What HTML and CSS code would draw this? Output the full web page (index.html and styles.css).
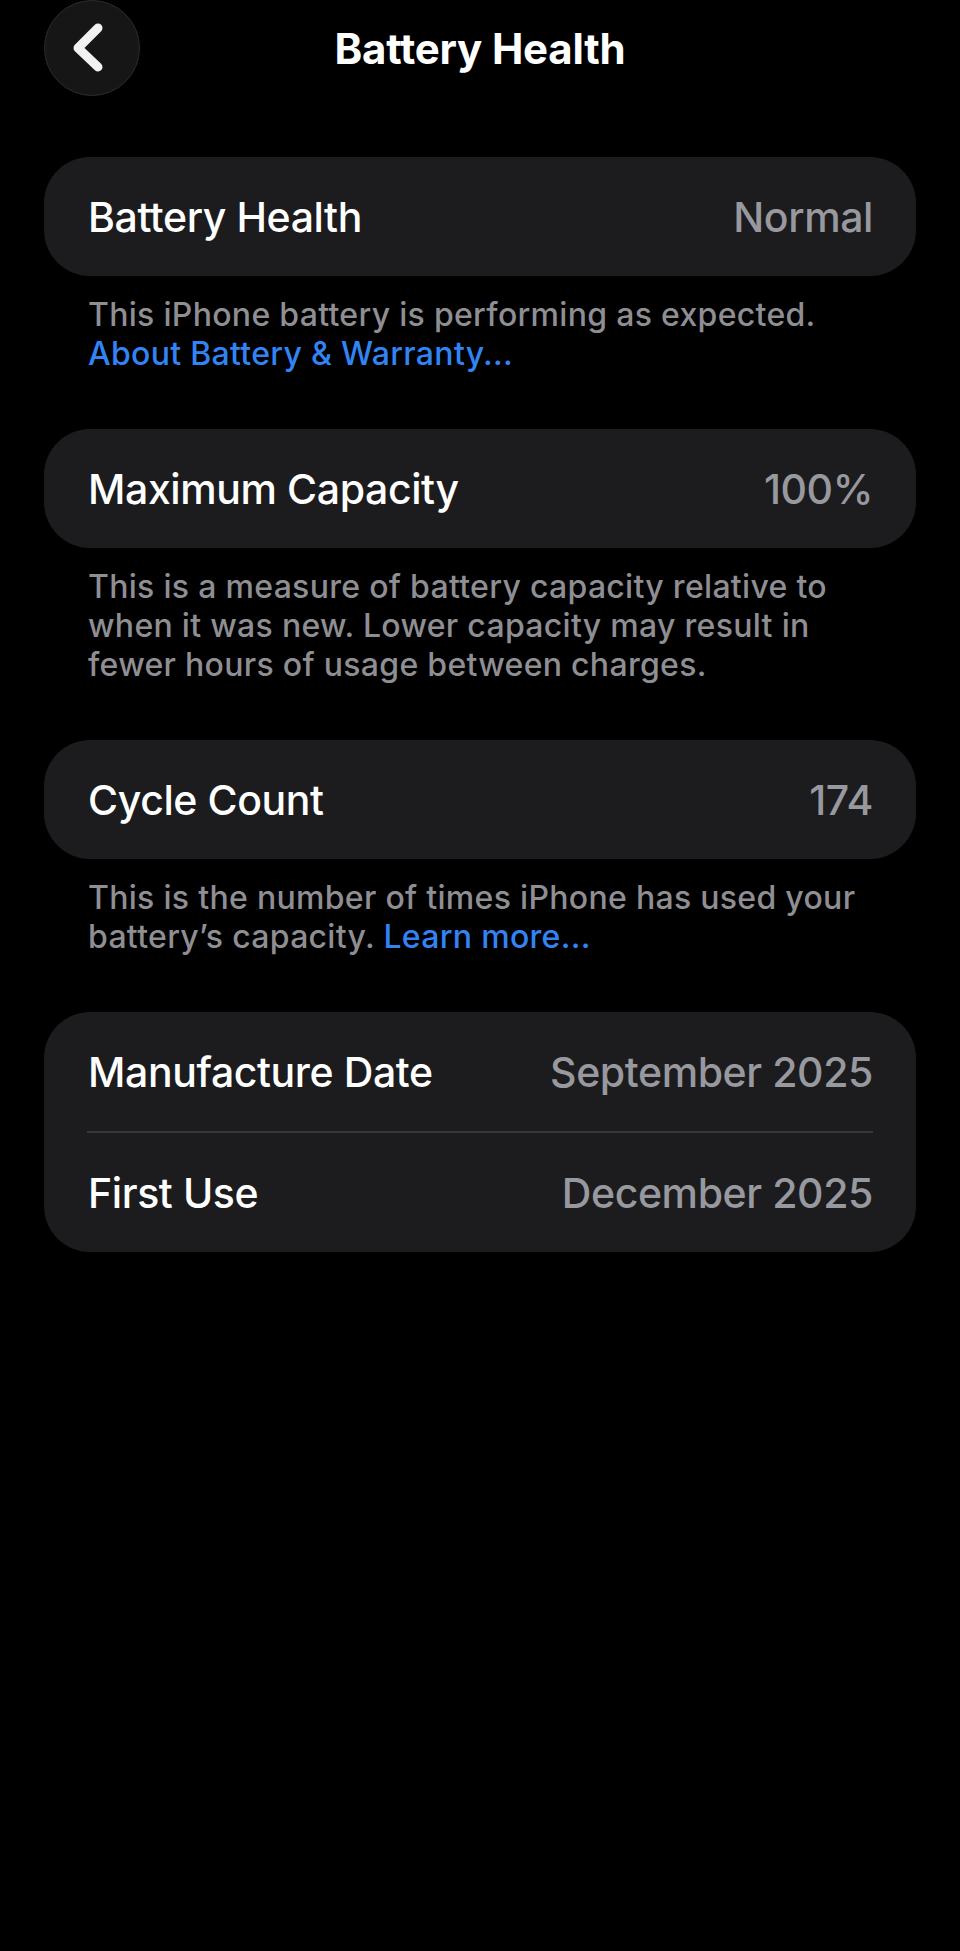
FILE: index.html
```html
<!DOCTYPE html>
<html lang="en">
<head>
  <meta charset="UTF-8">
  <meta name="viewport" content="width=device-width, initial-scale=1.0">
  <title>Battery Health</title>
  <link rel="stylesheet" href="styles.css">
</head>
<body>
  <div class="screen">
    <header class="nav">
      <button class="back-btn" aria-label="Back">
        <svg width="40" height="56" viewBox="0 0 40 56">
          <path d="M30 8 L10 28 L30 47" fill="none" stroke="#f2f2f2" stroke-width="9" stroke-linecap="round" stroke-linejoin="round"/>
        </svg>
      </button>
      <h1 class="nav-title">Battery Health</h1>
    </header>

    <main class="content">
      <section class="group">
        <div class="card">
          <div class="row">
            <span class="label">Battery Health</span>
            <span class="value">Normal</span>
          </div>
        </div>
        <p class="footer">This iPhone battery is performing as expected.<br><a href="#" class="link">About Battery &amp; Warranty...</a></p>
      </section>

      <section class="group">
        <div class="card">
          <div class="row">
            <span class="label">Maximum Capacity</span>
            <span class="value">100%</span>
          </div>
        </div>
        <p class="footer">This is a measure of battery capacity relative to when it was new. Lower capacity may result in fewer hours of usage between charges.</p>
      </section>

      <section class="group">
        <div class="card">
          <div class="row">
            <span class="label">Cycle Count</span>
            <span class="value">174</span>
          </div>
        </div>
        <p class="footer">This is the number of times iPhone has used your battery’s capacity. <a href="#" class="link">Learn more...</a></p>
      </section>

      <section class="group">
        <div class="card">
          <div class="row">
            <span class="label">Manufacture Date</span>
            <span class="value">September 2025</span>
          </div>
          <div class="divider"></div>
          <div class="row">
            <span class="label">First Use</span>
            <span class="value">December 2025</span>
          </div>
        </div>
      </section>
    </main>
  </div>
</body>
</html>
```

FILE: styles.css
```css
* {
  margin: 0;
  padding: 0;
  box-sizing: border-box;
}

body {
  background: #000;
  color: #fff;
  font-family: 'Inter', 'Liberation Sans', sans-serif;
  min-height: 100vh;
}

.screen {
  width: 960px;
}

.nav {
  position: relative;
  height: 96px;
  display: flex;
  align-items: center;
  justify-content: center;
}

.back-btn {
  position: absolute;
  left: 44px;
  top: 0;
  width: 96px;
  height: 96px;
  border-radius: 50%;
  background: #161617;
  border: 1.5px solid #2c2c2e;
  display: flex;
  align-items: center;
  justify-content: center;
  padding-right: 8px;
  cursor: pointer;
}

.nav-title {
  font-size: 42px;
  font-weight: 700;
  letter-spacing: -0.2px;
  color: #fff;
}

.content {
  padding: 61px 44px 0;
  display: flex;
  flex-direction: column;
  gap: 56px;
}

.card {
  background: #1c1c1e;
  border-radius: 46px;
}

.row {
  height: 119px;
  padding: 0 43px 0 44px;
  display: flex;
  align-items: center;
  justify-content: space-between;
  font-size: 41px;
  letter-spacing: -0.4px;
}

.label {
  color: #fff;
  font-weight: 500;
}

.value {
  color: #98989f;
  font-weight: 500;
}

.divider {
  height: 2px;
  margin: 0 43px;
  background: #38383a;
}

.footer {
  margin-top: 19px;
  padding: 0 44px;
  font-size: 32px;
  line-height: 39px;
  color: #8e8e93;
  font-weight: 500;
  letter-spacing: 0.3px;
}

.link {
  color: #3284f5;
  text-decoration: none;
}
```
